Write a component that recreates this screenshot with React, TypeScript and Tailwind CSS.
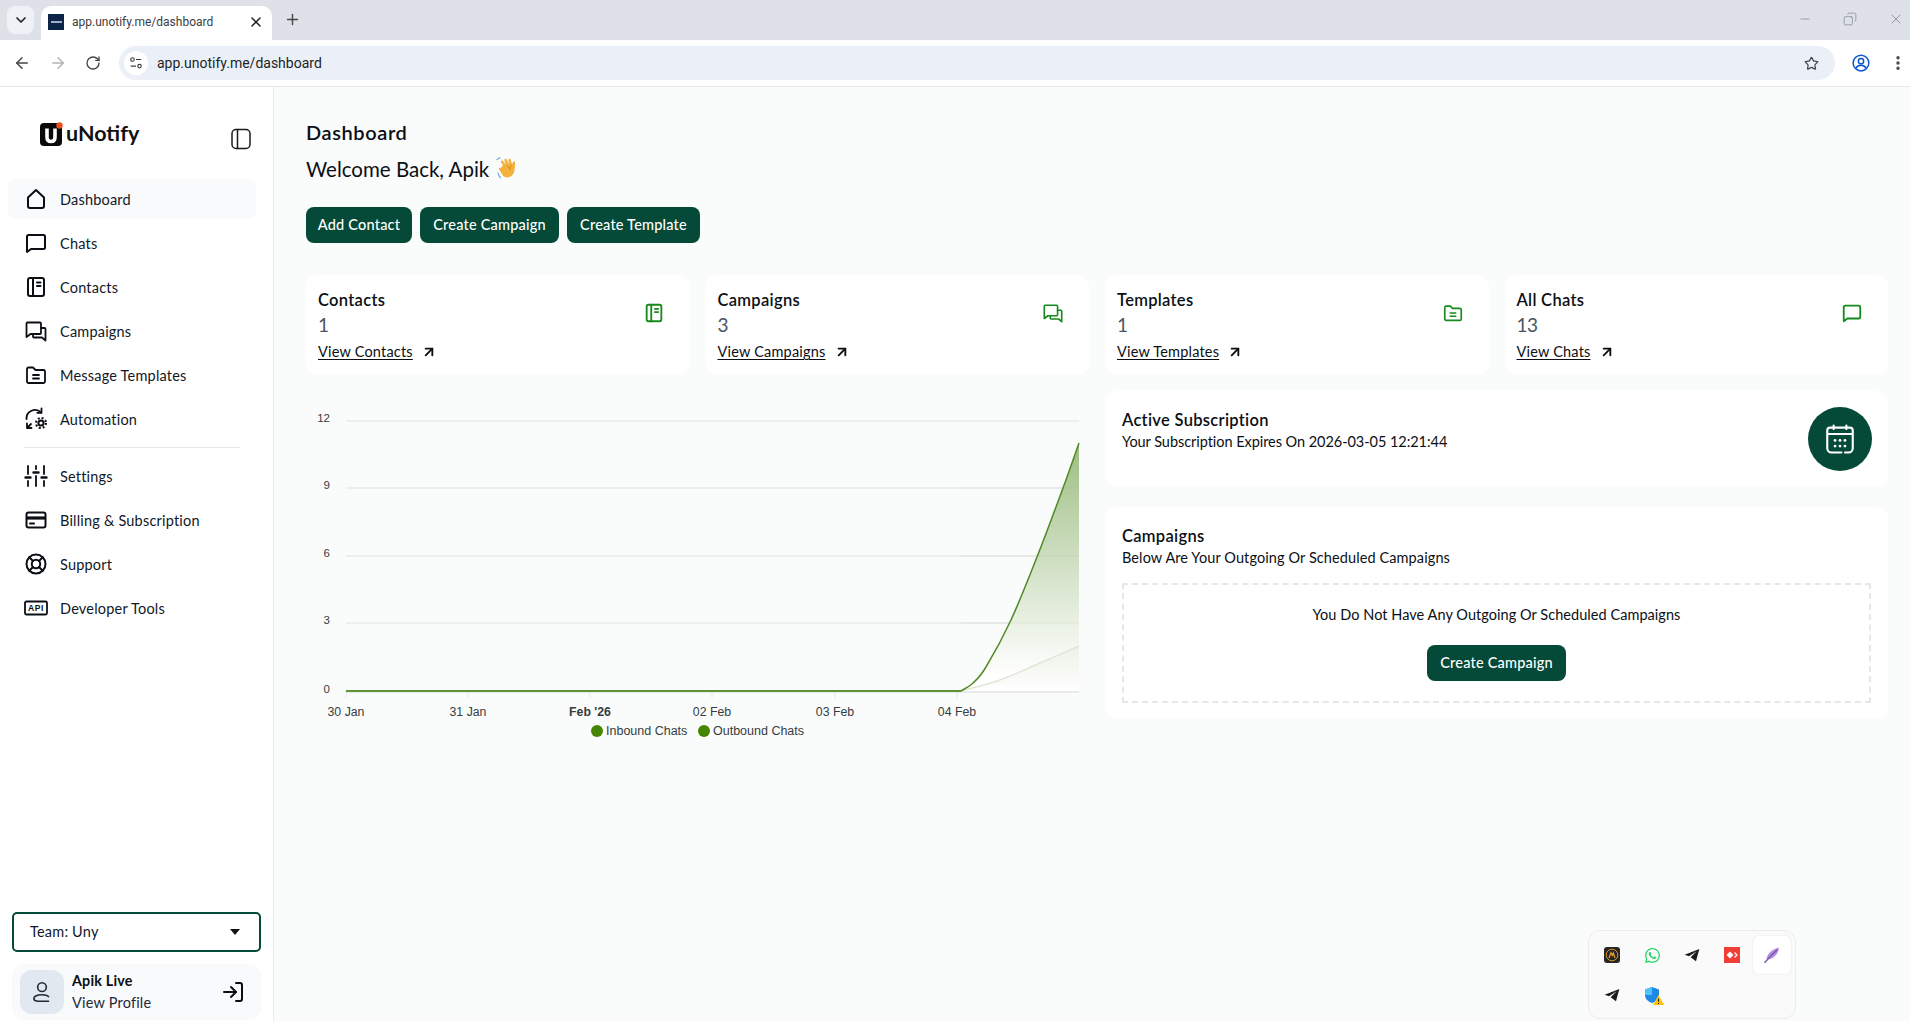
import React from "react";
import { ChevronDown, X, Plus, ArrowLeft, ArrowRight, RotateCw, Star, Minus, Copy, EllipsisVertical, ArrowUpRight, LogIn } from "lucide-react";
import { FaWhatsapp } from "react-icons/fa";

type IP = { className?: string };
const base = { viewBox: "0 0 24 24", fill: "none", stroke: "currentColor", strokeLinecap: "round", strokeLinejoin: "round" } as const;

const Home = ({ className }: IP) => (
  <svg {...base} strokeWidth={2} className={className}><path d="M4 10.5 12 3l8 7.5V19a2 2 0 0 1-2 2H6a2 2 0 0 1-2-2z" /></svg>
);
const Chat = ({ className }: IP) => (
  <svg {...base} strokeWidth={2} className={className}><path d="M3 5.5A1.5 1.5 0 0 1 4.500 4h15A1.500 1.500 0 0 1 21 5.500v11a1.500 1.500 0 0 1-1.500 1.500H7l-4 3z" /></svg>
);
const Book = ({ className }: IP) => (
  <svg {...base} strokeWidth={2} className={className}><rect x="4" y="3" width="16" height="18" rx="2" /><path d="M9 3v18M13 7.500h3.500M13 11h3.500" /></svg>
);
const Msgs = ({ className }: IP) => (
  <svg {...base} strokeWidth={1.8} className={className}><path d="M2.500 4.500a1 1 0 0 1 1-1H16a1 1 0 0 1 1 1V14a1 1 0 0 1-1 1H6.500l-4 3z" /><path d="M17 9h3.500a1 1 0 0 1 1 1v11.500l-3.500-3H10a1 1 0 0 1-1-1V15" /></svg>
);
const Folder = ({ className }: IP) => (
  <svg {...base} strokeWidth={1.8} className={className}><path d="M3 6a1.500 1.500 0 0 1 1.500-1.500H9l2.500 2.500h8A1.500 1.500 0 0 1 21 8.500v10a1.500 1.500 0 0 1-1.500 1.500h-15A1.500 1.500 0 0 1 3 18.500z" /><path d="M9 12h6M9 15.500h6" /></svg>
);
const Auto = ({ className }: IP) => (
  <svg {...base} strokeWidth={1.8} className={className}>
    <path d="M2.500 12A8.500 8.500 0 0 1 17 5.500" /><path d="M17.500 1.500v4.300h-4.300" /><path d="M3 21l4-4M3 16.500V21h4.500" />
    <circle cx="17" cy="16" r="2.600" strokeWidth={2} /><circle cx="17" cy="16" r="5" strokeWidth={2} strokeDasharray="2 1.930" strokeLinecap="butt" />
  </svg>
);
const Sliders = ({ className }: IP) => (
  <svg {...base} strokeWidth={2} className={className}>
    <path d="M4 2v8M4 17v5M12 2v3M12 12v10M20 2v8M20 17v5" strokeWidth={1.800} />
    <path d="M1.500 13.500h5M9.500 8.500h5M17.500 13.500h5" strokeWidth={2.400} />
  </svg>
);
const Card = ({ className }: IP) => (
  <svg {...base} strokeWidth={2} className={className}><rect x="2.500" y="4.500" width="19" height="15" rx="2" /><path d="M2.500 10h19" strokeWidth={3.200} strokeLinecap="butt" /><path d="M6 15.500h4" /></svg>
);
const Buoy = ({ className }: IP) => (
  <svg {...base} strokeWidth={2} className={className}><circle cx="12" cy="12" r="9.500" /><circle cx="12" cy="12" r="4.200" /><path d="m5.300 5.300 3.700 3.700M15 15l3.700 3.700M15 9l3.700-3.700M5.300 18.700 9 15" /></svg>
);
const Api = ({ className }: IP) => (
  <svg viewBox="0 0 24 16" className={className} fill="none">
    <rect x="1" y="1.500" width="22" height="13" rx="1.500" stroke="currentColor" strokeWidth="1.800" />
    <text x="12" y="11.300" textAnchor="middle" fontSize="8.500" fontWeight="800" fill="currentColor" fontFamily="Liberation Sans" letterSpacing="0.600">API</text>
  </svg>
);
const Panel = ({ className }: IP) => (
  <svg {...base} strokeWidth={1.500} className={className}><rect x="3" y="2.500" width="18" height="19" rx="4" /><path d="M8.500 2.500v19" /></svg>
);
const Person = ({ className }: IP) => (
  <svg {...base} strokeWidth={1.500} className={className}><circle cx="12" cy="7.500" r="4" /><path d="M18 20.500H9c-3 0-4.500-1-4.500-2.500 0-2.200 3-3.500 7.500-3.500 3 0 5 .6 6 1.700" /></svg>
);
const Calendar = ({ className }: IP) => (
  <svg {...base} strokeWidth={1.500} className={className}>
    <path d="M7.500 2.500v2.500M16.500 2.500v2.500M3.500 8.500h17" />
    <path d="M5 4h14a2 2 0 0 1 2 2v12.500a3 3 0 0 1-3 3h-2.500M13 21.500H6a3 3 0 0 1-3-3V6a2 2 0 0 1 2-2" />
    <g fill="currentColor" stroke="none">
      <circle cx="8.500" cy="13" r="1" /><circle cx="12" cy="13" r="1" /><circle cx="15.500" cy="13" r="1" />
      <circle cx="8.500" cy="17" r="1" /><circle cx="12" cy="17" r="1" /><circle cx="15.500" cy="17" r="1" />
    </g>
  </svg>
);
const Plane = ({ className }: IP) => (
  <svg viewBox="0 0 24 24" className={className} fill="currentColor"><path d="M23 3 1 11.500l6.500 2.500L19 6.500 10 15.500l8 6z" /></svg>
);
const Logo = () => (
  <svg viewBox="0 0 23 24" className="h-[24px] w-[23px] shrink-0">
    <rect x="0" y="1" width="22" height="23" rx="4" fill="#0a0a0a" />
    <path d="M7 6.500v8.500c0 3 1.600 4.500 4 4.500s4-1.500 4-4.500V6.500" fill="none" stroke="#fff" strokeWidth="3.600" />
    <circle cx="19.500" cy="3.500" r="3.200" fill="#e8501f" />
  </svg>
);

const nav1 = [
  { label: "Dashboard", Icon: Home, active: true },
  { label: "Chats", Icon: Chat },
  { label: "Contacts", Icon: Book },
  { label: "Campaigns", Icon: Msgs },
  { label: "Message Templates", Icon: Folder },
  { label: "Automation", Icon: Auto },
];
const nav2 = [
  { label: "Settings", Icon: Sliders },
  { label: "Billing & Subscription", Icon: Card },
  { label: "Support", Icon: Buoy },
  { label: "Developer Tools", Icon: Api },
];

function NavRow({ label, Icon, active }: { label: string; Icon: React.FC<IP>; active?: boolean }) {
  return (
    <div className={`flex h-10 w-[248px] items-center rounded-lg pl-[16px] ${active ? "bg-[#f8fafc]" : ""}`}>
      <Icon className="h-[24px] w-[24px] shrink-0 text-[#0b0f14]" />
      <span className="ml-[12px] mt-[1px] text-[14.500px] tracking-[0.2px] text-[#111827]">{label}</span>
    </div>
  );
}

const stats = [
  { title: "Contacts", n: "1", link: "View Contacts", Icon: Book },
  { title: "Campaigns", n: "3", link: "View Campaigns", Icon: Msgs },
  { title: "Templates", n: "1", link: "View Templates", Icon: Folder },
  { title: "All Chats", n: "13", link: "View Chats", Icon: Chat },
];

function Btn({ children, className = "" }: { children: React.ReactNode; className?: string }) {
  return (
    <button className={`flex h-9 items-center justify-center rounded-lg bg-[#054a38] text-[14.500px] font-medium tracking-[0.2px] text-white ${className}`}>
      {children}
    </button>
  );
}

function Wave() {
  return (
    <svg viewBox="0 0 24 26" className="ml-[7px] h-[26px] w-[24px]">
      <path d="M7 9 5 6.500c-1-1.200 1-2.700 2-1.500l3 3.500-1.500-4c-.6-1.500 1.500-2.300 2.200-.9l2.300 4.900-.6-4.400c-.2-1.600 2-1.900 2.400-.4l1.300 5.300.7-2.600c.4-1.400 2.400-1 2.300.5-.2 3.500-.2 7.800-1.600 10.500-2.200 4.200-7.200 5.300-10.500 2.300L3.200 13.600c-1.100-1.100.5-2.600 1.600-1.600z" fill="#f5b13d" />
      <path d="M16 8.500c-2 1.500-2.500 3.500-1.800 5.500M11 9.500l2.500 3" stroke="#d98a1f" strokeWidth="1" fill="none" strokeLinecap="round" />
      <path d="M2 17c.3 2 1.200 3.500 2.500 4.700M1 3.500C2 2.500 3 2 4 1.800" stroke="#6aa7e0" strokeWidth="1.200" fill="none" strokeLinecap="round" />
    </svg>
  );
}

function smooth(p: number[][]) {
  let d = `M${p[0][0]} ${p[0][1]}`;
  for (let i = 0; i < p.length - 1; i++) {
    const a = p[Math.max(i - 1, 0)], b = p[i], c = p[i + 1], e = p[Math.min(i + 2, p.length - 1)];
    const c1x = b[0] + (c[0] - a[0]) / 6, c1y = b[1] + (c[1] - a[1]) / 6;
    const c2x = c[0] - (e[0] - b[0]) / 6, c2y = c[1] - (e[1] - b[1]) / 6;
    d += ` C${c1x.toFixed(1)} ${c1y.toFixed(1)} ${c2x.toFixed(1)} ${c2y.toFixed(1)} ${c[0]} ${c[1]}`;
  }
  return d;
}

function Chart() {
  const out = smooth([[655, 291], [667, 283], [680, 267], [705, 220], [731, 157], [757, 88], [773, 43]]);
  const inb = smooth([[655, 291], [694, 280], [734, 263], [773, 246]]);
  const grid = [
    { y: 21, l: "12" }, { y: 88, l: "9" }, { y: 156, l: "6" }, { y: 223, l: "3" }, { y: 292, l: "0" },
  ];
  const xs = [
    { x: 40, l: "30 Jan" }, { x: 162, l: "31 Jan" }, { x: 284, l: "Feb '26", b: true }, { x: 406, l: "02 Feb" }, { x: 529, l: "03 Feb" }, { x: 651, l: "04 Feb" },
  ];
  const font = "Liberation Sans, sans-serif";
  return (
    <svg width="783" height="350" viewBox="0 0 783 350" className="block">
      <defs>
        <linearGradient id="g1" gradientUnits="userSpaceOnUse" x1="0" y1="43" x2="0" y2="275">
          <stop offset="0" stopColor="#9dbe82" />
          <stop offset="0.5" stopColor="#cfdfc2" />
          <stop offset="1" stopColor="#ffffff" />
        </linearGradient>
        <linearGradient id="g2" gradientUnits="userSpaceOnUse" x1="0" y1="246" x2="0" y2="290">
          <stop offset="0" stopColor="#ecf1e6" />
          <stop offset="1" stopColor="#ffffff" />
        </linearGradient>
      </defs>
      {grid.map((g) => (
        <g key={g.l}>
          <line x1="40" x2="773" y1={g.y} y2={g.y} stroke="#e8eaec" strokeWidth={g.l === "0" ? 2 : 1.500} />
          <text x="24" y={g.y + 1} textAnchor="end" fontSize="11.500" fill="#373d3f" fontFamily={font}>{g.l}</text>
        </g>
      ))}
      <path d={`${out} L773 291 Z`} fill="url(#g1)" />
      <path d={`${inb} L773 291 Z`} fill="url(#g2)" />
      {grid.slice(1, 4).map((g) => (
        <line key={g.l} x1="655" x2="773" y1={g.y} y2={g.y} stroke="#8a9a7a" strokeOpacity="0.12" strokeWidth="1.200" />
      ))}
      <path d={inb} fill="none" stroke="#dfe8d6" strokeWidth="1.500" />
      <path d={out} fill="none" stroke="#4f8a24" strokeWidth="1.500" />
      <line x1="40" x2="655" y1="291" y2="291" stroke="#5f9333" strokeWidth="2" />
      {xs.map((t) => (
        <g key={t.l}>
          <line x1={t.x} x2={t.x} y1="292" y2="298" stroke="#e4e6e8" />
          <text x={t.x} y="316" textAnchor="middle" fontSize="12.300" fontWeight={t.b ? 700 : 400} fill="#373d3f" fontFamily={font}>{t.l}</text>
        </g>
      ))}
      <circle cx="291" cy="331" r="6" fill="#458500" />
      <text x="300" y="335" fontSize="12.500" fill="#373d3f" fontFamily={font}>Inbound Chats</text>
      <circle cx="398" cy="331" r="6" fill="#458500" />
      <text x="407" y="335" fontSize="12.500" fill="#373d3f" fontFamily={font}>Outbound Chats</text>
    </svg>
  );
}

export default function App() {
  return (
    <div className="flex h-screen w-full flex-col overflow-hidden bg-white font-[family-name:Lato,sans-serif] text-[#0b0f14]">
      {/* browser tab strip */}
      <div className="flex h-10 shrink-0 items-end bg-[#dee1e8] font-[family-name:Roboto,sans-serif]">
        <div className="mb-[6px] ml-[7px] flex h-[28px] w-[27px] items-center justify-center rounded-lg bg-[#eef1f6]">
          <ChevronDown className="h-4 w-4 text-[#1f1f1f]" strokeWidth={2.500} />
        </div>
        <div className="ml-[7px] flex h-[34px] w-[231px] items-center rounded-t-[10px] bg-white pb-[3px] pl-[7px]">
          <div className="flex h-4 w-4 items-center justify-center bg-[#0b2447]">
            <div className="h-[2px] w-[11px] bg-[#9fb0c6]" />
          </div>
          <span className="ml-[8px] text-[12px] text-[#3c4043]">app.unotify.me/dashboard</span>
          <X className="ml-auto mr-[8px] h-4 w-4 text-[#1f1f1f]" strokeWidth={2.200} />
        </div>
        <Plus className="mb-[12px] ml-[12px] h-[17px] w-[17px] text-[#444746]" strokeWidth={2} />
        <div className="mb-[13px] ml-auto flex items-center">
          <Minus className="mr-[31px] h-[14px] w-[14px] text-[#6b7280]" strokeWidth={1} />
          <Copy className="mr-[31px] h-[14px] w-[14px] -scale-x-100 text-[#6b7280]" strokeWidth={1} />
          <X className="mr-[6px] h-[16px] w-[16px] text-[#6b7280]" strokeWidth={1} />
        </div>
      </div>
      {/* browser toolbar */}
      <div className="flex h-[47px] shrink-0 items-center border-b border-[#e4e6e8] bg-white font-[family-name:Roboto,sans-serif]">
        <ArrowLeft className="ml-[13px] h-[18px] w-[18px] text-[#444746]" strokeWidth={2} />
        <ArrowRight className="ml-[18px] h-[18px] w-[18px] text-[#b3b5b8]" strokeWidth={2} />
        <RotateCw className="ml-[18px] h-[16px] w-[16px] text-[#444746]" strokeWidth={2} />
        <div className="ml-[18px] flex h-[34px] w-[1716px] items-center rounded-full bg-[#ebf0f8] pl-[5px]">
          <div className="flex h-6 w-6 items-center justify-center rounded-full bg-white">
            <svg viewBox="0 0 16 16" className="h-[14px] w-[14px] text-[#3c4043]" fill="none" stroke="currentColor" strokeWidth="1.300">
              <circle cx="4" cy="4" r="2" /><path d="M8 4h6M2 11.500h6" /><circle cx="12" cy="11.500" r="2" />
            </svg>
          </div>
          <span className="ml-[9px] text-[14px] text-[#1f1f1f]">app.unotify.me/dashboard</span>
          <Star className="ml-auto mr-[16px] h-[15px] w-[15px] text-[#444746]" strokeWidth={2} />
        </div>
        <svg viewBox="0 0 24 24" className="ml-[17px] h-[18px] w-[18px] text-[#0b57d0]" fill="none" stroke="currentColor" strokeWidth="2">
          <circle cx="12" cy="12" r="10.500" /><circle cx="12" cy="9.500" r="3.500" /><path d="M5 19c2-3 4-4 7-4s5 1 7 4" />
        </svg>
        <EllipsisVertical className="ml-[19px] h-[18px] w-[18px] text-[#444746]" strokeWidth={2.500} />
      </div>

      <div className="flex min-h-0 flex-1">
        {/* sidebar */}
        <aside className="flex w-[274px] shrink-0 flex-col border-r border-[#e9ebee] bg-white pb-[1px]">
          <div className="flex h-[92px] items-start">
            <div className="ml-[40px] mt-[35px] flex items-center">
              <Logo />
              <span className="ml-[3px] -mt-[2px] text-[21.500px] font-bold leading-[26px] text-[#111]">uNotify</span>
            </div>
            <Panel className="ml-auto mr-[20px] mt-[40px] h-[24px] w-[24px] text-[#1a1a1a]" />
          </div>
          <div className="ml-[8px] flex flex-col gap-[4px]">
            {nav1.map((n) => <NavRow key={n.label} {...n} />)}
          </div>
          <div className="ml-[24px] mt-[8px] h-px w-[216px] bg-[#e5e7eb]" />
          <div className="ml-[8px] mt-[8px] flex flex-col gap-[4px]">
            {nav2.map((n) => <NavRow key={n.label} {...n} />)}
          </div>
          <div className="mt-auto px-[12px]">
            <div className="flex h-10 w-[249px] items-center rounded-[5px] border-2 border-[#054a38] pl-[16px] pr-[19px]">
              <span className="text-[14.500px] tracking-[0.2px] text-[#111827]">Team: Uny</span>
              <span className="ml-auto h-0 w-0 border-x-[5px] border-t-[6px] border-x-transparent border-t-[#111]" />
            </div>
            <div className="mt-[12px] flex h-[56px] w-[249px] items-center rounded-xl bg-[#f8fafc] pl-[8px] pr-[16px]">
              <div className="flex h-[44px] w-[44px] items-center justify-center rounded-xl bg-[#e2e8f0]">
                <Person className="h-[26px] w-[26px] text-[#1f2937]" />
              </div>
              <div className="ml-[8px] flex flex-col">
                <span className="text-[14.300px] font-bold leading-[22px] tracking-[0.2px] text-[#0b0f14]">Apik Live</span>
                <span className="text-[14.500px] leading-[22px] tracking-[0.2px] text-[#1f2937]">View Profile</span>
              </div>
              <LogIn className="ml-auto h-[24px] w-[24px] text-[#0b0f14]" strokeWidth={2} />
            </div>
          </div>
        </aside>

        {/* main */}
        <main className="min-w-0 flex-1 bg-[#fafbfb] pl-[32px] pr-[22px]">
          <h1 className="mt-[32px] text-[20px] font-semibold leading-[26px] tracking-[0.6px] text-[#0b0f14]">Dashboard</h1>
          <div className="mt-[11px] flex h-[26px] items-center">
            <span className="text-[20.500px] leading-[26px] text-[#0b0f14]">Welcome Back, Apik</span>
            <Wave />
          </div>
          <div className="mt-[25px] flex gap-[8px]">
            <Btn className="w-[106px]">Add Contact</Btn>
            <Btn className="w-[139px]">Create Campaign</Btn>
            <Btn className="w-[133px]">Create Template</Btn>
          </div>

          <div className="mt-[32px] grid grid-cols-4 gap-[16px]">
            {stats.map((s) => (
              <div key={s.title} className="flex h-[100px] rounded-xl bg-white pl-[12px] pr-[25px]">
                <div className="flex flex-col pt-[13px]">
                  <span className="text-[16.500px] font-semibold leading-6 tracking-[0.3px] text-[#0b0f14]">{s.title}</span>
                  <span className="text-[19px] leading-[26px] tracking-[-0.5px] text-[#4b5563]">{s.n}</span>
                  <div className="mt-[4px] flex items-center">
                    <span className="text-[14.500px] leading-5 tracking-[0.2px] text-[#0b0f14] underline underline-offset-2">{s.link}</span>
                    <ArrowUpRight className="ml-[8px] h-[16px] w-[16px] text-[#0b0f14]" strokeWidth={2.800} />
                  </div>
                </div>
                <s.Icon className="ml-auto mt-[27px] h-[22px] w-[22px] text-[#168a1c]" />
              </div>
            ))}
          </div>

          <div className="mt-[16px] grid grid-cols-2 gap-[16px]">
            <div className="pt-[9px]"><Chart /></div>
            <div className="flex flex-col gap-[20px]">
              <div className="flex h-[96px] items-center rounded-xl bg-white pl-[17px] pr-[16px]">
                <div className="-mt-[18px] flex flex-col">
                  <span className="text-[16.500px] font-semibold leading-6 tracking-[0.3px] text-[#0b0f14]">Active Subscription</span>
                  <span className="text-[14.500px] leading-5 tracking-[-0.05px] text-[#0b0f14]">Your Subscription Expires On 2026-03-05 12:21:44</span>
                </div>
                <div className="ml-auto flex h-16 w-16 items-center justify-center rounded-full bg-[#054a38]">
                  <Calendar className="h-[34px] w-[34px] text-white" />
                </div>
              </div>
              <div className="h-[212px] rounded-xl bg-white px-[17px] pt-[17px]">
                <div className="text-[16.500px] font-semibold leading-6 tracking-[0.3px] text-[#0b0f14]">Campaigns</div>
                <div className="text-[14.500px] leading-5 tracking-[0.1px] text-[#0b0f14]">Below Are Your Outgoing Or Scheduled Campaigns</div>
                <div className="mt-[15px] flex h-[120px] flex-col items-center border-2 border-dashed border-[#e5e7eb] pt-[20px]">
                  <span className="text-[14.500px] leading-5 tracking-[0.05px] text-[#0b0f14]">You Do Not Have Any Outgoing Or Scheduled Campaigns</span>
                  <Btn className="mt-[20px] w-[139px]">Create Campaign</Btn>
                </div>
              </div>
            </div>
          </div>
        </main>
      </div>

      {/* system tray overlay */}
      <div className="absolute left-[1588px] top-[930px] grid h-[89px] w-[208px] grid-cols-[repeat(5,40px)] grid-rows-[repeat(2,40px)] content-start rounded-xl border border-[#ececec] bg-[#fafafa] pl-[3px] pt-[4px]">
        <TrayCell>
          <svg viewBox="0 0 16 16" className="h-4 w-4">
            <rect width="16" height="16" rx="3" fill="#262626" />
            <circle cx="8" cy="8" r="5.800" fill="none" stroke="#d8912a" strokeWidth="1" />
            <path d="M5 11 7 5.500l1.300 3 1-2.500L11 11" fill="none" stroke="#e8a233" strokeWidth="1.200" />
          </svg>
        </TrayCell>
        <TrayCell><FaWhatsapp className="h-[17px] w-[17px] text-[#25d366]" /></TrayCell>
        <TrayCell><Plane className="h-[16px] w-[16px] text-[#1c1c1c]" /></TrayCell>
        <TrayCell>
          <svg viewBox="0 0 16 16" className="h-4 w-4">
            <rect width="16" height="16" fill="#f03e36" />
            <path d="M6 4.500 9.500 8 6 11.500 2.500 8z" fill="#fff" />
            <path d="M10.500 5.500 13 8l-2.500 2.500" fill="none" stroke="#fff" strokeWidth="1.200" />
          </svg>
        </TrayCell>
        <TrayCell hl>
          <svg viewBox="0 0 16 16" className="h-4 w-4">
            <path d="M15 .500C14.500 5 12 9.500 7.500 11.500 5.500 12.500 3.500 12.500 2.500 12.500 3 8 6 3 15 .500z" fill="#b48fdc" />
            <path d="M13 3C9 6.500 5 10.500.800 15.500" fill="none" stroke="#7d4fb5" strokeWidth="1.300" strokeLinecap="round" />
          </svg>
        </TrayCell>
        <TrayCell><Plane className="h-[16px] w-[16px] text-[#1c1c1c]" /></TrayCell>
        <TrayCell>
          <div className="relative h-4 w-4">
            <svg viewBox="0 0 16 16" className="h-4 w-4"><path d="M8 0 15 2.500V8c0 4-3 6.500-7 8-4-1.500-7-4-7-8V2.500z" fill="#1e88e5" /><path d="M8 0 1 2.500V8h7z" fill="#4fc3f7" /></svg>
            <svg viewBox="0 0 12 11" className="absolute -bottom-[2px] -right-[4px] h-[10px] w-[11px]"><path d="M6 0 12 11H0z" fill="#ffc107" /><path d="M6 4v3.500M6 8.800v1" stroke="#222" strokeWidth="1.200" /></svg>
          </div>
        </TrayCell>
      </div>
    </div>
  );
}

function TrayCell({ children, hl }: { children: React.ReactNode; hl?: boolean }) {
  return (
    <div className="flex h-[40px] w-[40px] items-center justify-center">
      <div className={`flex h-[38px] w-[38px] items-center justify-center rounded-md ${hl ? "bg-white shadow-[0_0_2px_rgba(0,0,0,0.12)]" : ""}`}>
        {children}
      </div>
    </div>
  );
}
